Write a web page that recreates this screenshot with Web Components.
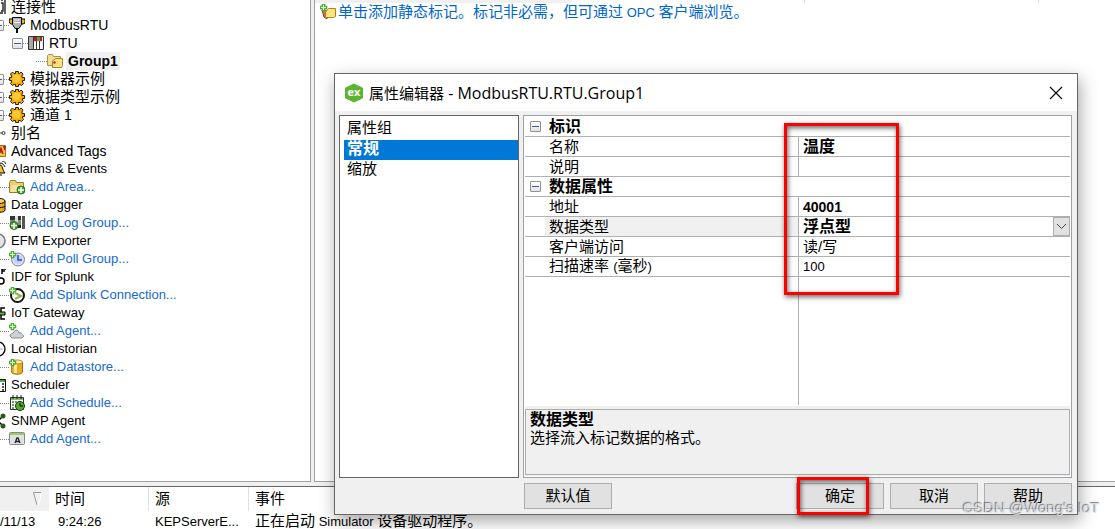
<!DOCTYPE html>
<html lang="zh-CN">
<head>
<meta charset="utf-8">
<meta name="viewport" content="width=device-width, initial-scale=1">
<title>KEPServerEX</title>
<style>
html, body { height: 100%; margin: 0; }
body { font: 13px/18px "Liberation Sans", "Noto Sans CJK SC", sans-serif; color: #000; background: #f0f0f0; overflow: hidden; }
</style>
</head>
<body>
<kep-app></kep-app>

<script>
const ICONS = {
  link: '<path d="M11 1h2M11 4h2v8h-2M15 1v14M10 14h3" stroke="#222" fill="none" stroke-width="1.400"/>',
  serial: '<path d="M0 2h4v5H2L.500 6zM12 2h4v4l-2 1h-2z" fill="#f6b51c" stroke="#000"/><path d="M3.500 .5h9v7l-2.500 4H6l-2.500-4z" fill="#b4b4b4" stroke="#000"/><path d="M5 3h6M5 5.500h6" stroke="#eee"/><path d="M8 11v5" stroke="#000" stroke-width="2"/>',
  device: '<path d="M.5 1.500h15v13H.5z" fill="#e4e4e4" stroke="#333"/><path d="M6 2h8v4H6z" fill="#c9141b"/><path d="M9 2h3v4H9z" fill="#52a342"/><path d="M1 2h4v12H1z" fill="#a9a9a9"/><path d="M5.500 2v12M8.500 6v8M11.500 6v8" stroke="#333"/><path d="M6 7h2v7H6zM9 7h2v7H9zM12 7h2v7h-2z" fill="#fff"/>',
  group: '<path d="M.5 2.500l1-1h4l1 2h7v9H.5z" fill="#f0dc94" stroke="#b6923a"/><path d="M5.500 8l3-2.500h7v7l-1 2h-9z" fill="#ffe07a" stroke="#aa822b"/><circle cx="7.500" cy="9.500" r="1.200" fill="#b22"/>',
  gear: '<path d="M6.500 .5h3v2h1l1.500-1.500 2 2L13 5v1.500h2.500v3H13.500V11l1 1.500-2 2-1.500-1H9.500v2h-3v-2H5L3.500 14.500l-2-2 1-1.500V9.500h-2v-3h2V5L1.500 3l2-2L5 2.500h1.500z" fill="#f4ac0c" stroke="#2b1c00"/><circle cx="7.500" cy="7.500" r="4" fill="#ffca32"/>',
  alias: '<path d="M7 8h5" stroke="#444"/><circle cx="13.500" cy="8" r="1.500" fill="#fff" stroke="#333"/>',
  tag: '<path d="M2 2.500h13.500v11H2z" fill="#f3c641" stroke="#9a7320"/><path d="M9 11l2-6 2 6M10 9h3M13 4h3M14.500 3v4" stroke="#b51c16" stroke-width="1.300" fill="none"/>',
  bell: '<path d="M5 12c4-2 0-8 5-8 3 0 2 5 5 8z" fill="#f4c22e" stroke="#000"/><path d="M10 2c3 0 4 2 5 4M12 0c2 0 3 1 4 3M9 14h3" stroke="#000" fill="none"/>',
  folder: '<path d="M.5 3.500l1-2h5l1 2h7v10H.5z" fill="#eacf75" stroke="#9e7b2f"/><path d="M1 13l2-7h11l-1 7z" fill="#f6e2a0"/>',
  database: '<path d="M4 4v9c0 3 11 3 11 0V4z" fill="#eea91b" stroke="#000"/><ellipse cx="9.500" cy="4" rx="5.500" ry="2.500" fill="#ffd34d" stroke="#000"/><path d="M4 9c0 2 11 2 11 0" fill="none" stroke="#000"/>',
  log: '<path d="M1 1h11v12H1z" fill="#888"/><path d="M1 1h11v4H1z" fill="#333"/><path d="M6 1h3v12H6z" fill="#ddd"/><path d="M13 1h3v13h-3z" fill="#555"/><path d="M8 10h4v3H8z" fill="#222"/>',
  efm: '<circle cx="8" cy="8" r="7" fill="#e4e4e4" stroke="#777" stroke-width="1.500"/>',
  poll: '<circle cx="9" cy="8.500" r="6.500" fill="#dfe3f0" stroke="#80828e"/><circle cx="9" cy="8.500" r="4.500" fill="#c3d0ff"/><path d="M9 4v5h4" stroke="#2847cb" stroke-width="1.500" fill="none"/>',
  idf: '<path d="M12 5V0h4M12 2h3" stroke="#000" stroke-width="1.500" fill="none"/><circle cx="11" cy="12" r="3" fill="#fff" stroke="#000" stroke-width="1.500"/>',
  splunk: '<circle cx="8.500" cy="8.500" r="6.500" fill="#fff" stroke="#151515" stroke-width="2"/><path d="M6 6l6 3-6 3" stroke="#8fb64a" stroke-width="2" fill="none"/>',
  iot: '<path d="M5 7h10v3H5z" fill="#74b63e" stroke="#000"/><path d="M11 7V3h4M11 10v4h4" stroke="#000" fill="none" stroke-width="1.500"/>',
  agent: '<path d="M1 13c0-3 3-2 4-4 1-3 5-2 5 1 3-1 3 2 5 3l-2 2H3z" fill="#cdd1d8" stroke="#888"/>',
  history: '<circle cx="8" cy="8" r="7" fill="#fff" stroke="#000" stroke-width="1.300"/><path d="M8 8h5" stroke="#aaa" fill="none"/>',
  store: '<path d="M2.500 3v10c0 3 11 3 11 0V3z" fill="#e9af20" stroke="#a47414"/><path d="M5 5h3v9H5z" fill="#ffe99a"/><ellipse cx="8" cy="3" rx="5.500" ry="2" fill="#fff0a9" stroke="#b88b21"/>',
  calendar: '<path d="M1 2.500h14.500v12H1z" fill="#fff" stroke="#111"/><path d="M1 3h14v2H1z" fill="#57a83a"/><path d="M3 7h2M7 7h2M12 7h2M3 10h2M7 10h2M12 10h2M12 13h2" stroke="#222" stroke-width="1.500"/>',
  schedule: '<path d="M1.500 2.500h13v12h-13z" fill="#fff" stroke="#233"/><path d="M2 3h12v2H2z" fill="#86bd68"/><path d="M4 0v4M8 0v4M12 0v4" stroke="#222"/><path d="M3 7h2M6 7h2M9 7h2M3 10h2M3 13h2" stroke="#3b7d29" stroke-width="1.500"/><circle cx="11" cy="11" r="4.500" fill="#55a82f" stroke="#173c0c"/><path d="M11 8v3h3" stroke="#000" fill="none"/>',
  snmp: '<path d="M8 8l5-5M8 8l5 5" stroke="#000" stroke-width="1.500"/><circle cx="13" cy="3" r="2.500" fill="#285b20"/><circle cx="13" cy="13" r="2.500" fill="#285b20"/><circle cx="8" cy="8" r="2" fill="#000"/>',
  form: '<rect x=".5" y="1.500" width="15" height="12" rx="1" fill="#dfe2e6" stroke="#888"/><path d="M1 2h14v2H1z" fill="#9fcc61"/><path d="M6 12l2-5h1l2 5M7 10.500h3" fill="none" stroke="#222" stroke-width="1.300"/>',
  newtag: '<path d="M2 6l2 7 3 2V7z" fill="#d96f5b" stroke="#853d33"/><path d="M5.500 8l3-3.500h7v8l-2 1h-8z" fill="#ffe27a" stroke="#ac8225"/>'
};
const PLUS = {
  br: '<circle cx="12" cy="11" r="4" fill="#42a62c" stroke="#267416"/><path d="M12 8v6M9 11h6" stroke="#fff" stroke-width="1.500"/>',
  bl: '<circle cx="5" cy="10.500" r="4" fill="#42a62c" stroke="#267416"/><path d="M5 8v6M2 10.500h6" stroke="#fff" stroke-width="1.500"/>',
  tl: '<path d="M2 0h3v2h2v3H5v2H2V5H0V2h2z" fill="#5ab83a" stroke="#3d9228" stroke-width=".500"/><path d="M3.500 1v5M1 3.500h5" stroke="#d9ffc9"/>'
};

const define = (name, css, html, setup) => customElements.define(name, class extends HTMLElement {
  constructor() {
    super();
    const root = this.attachShadow({ mode: 'open' });
    const t = document.createElement('template');
    t.innerHTML = `<style>*{box-sizing:border-box}.cjk{font-size:15px}${css}</style>${html}`;
    root.append(t.content.cloneNode(true));
  }
  connectedCallback() { if (setup) setup.call(this, this.shadowRoot); }
});

define('kep-icon', ':host{display:block;flex:none;width:16px;height:16px}svg{display:block;width:16px;height:16px}',
  '<svg viewBox="0 0 16 16" aria-hidden="true"></svg>',
  function (root) {
    root.querySelector('svg').innerHTML = (ICONS[this.getAttribute('name')] || '') + (PLUS[this.getAttribute('plus')] || '');
  });

define('kep-expander', `
:host{display:block;width:11px;height:11px;flex:none}
button{display:block;width:11px;height:11px;padding:0;border:1px solid #919191;border-radius:1px;background:linear-gradient(#fff,#e2e2e2)}
button::after{content:"";display:block;width:7px;height:1px;margin:0 auto;background:#3b5aa8}`,
  '<button type="button" aria-label="折叠"></button>');

define('kep-tree-item', `
:host{display:flex;align-items:center;height:18px;white-space:nowrap}
.gutter{display:flex;align-items:center;justify-content:flex-end;flex:none;width:0}
:host([level="1"]) .gutter{width:19px}
:host([level="2"]) .gutter{width:38px}
:host([level="3"]) .gutter{width:57px}
.dots{width:5px;border-top:1px dotted #888}
.leaf .dots{width:11px}
.label{margin-left:3px;padding:0 2px}
a{color:#1569d0;text-decoration:none}
:host([large]) .label{font-size:14px}
:host([selected]) .label{background:#f0f0f0;font-weight:bold;font-size:14px}`,
  `<span class="gutter"><span class="dots"></span></span><kep-icon></kep-icon><span class="label"><slot></slot></span>`,
  function (root) {
    const icon = root.querySelector('kep-icon');
    icon.replaceWith(Object.assign(document.createElement('template'), {
      innerHTML: `<kep-icon name="${this.getAttribute('icon')}" plus="${this.getAttribute('plus') || ''}"></kep-icon>`
    }).content);
    const gutter = root.querySelector('.gutter');
    if (this.hasAttribute('open')) gutter.prepend(document.createElement('kep-expander'));
    else gutter.classList.add('leaf');
    if (this.hasAttribute('link')) {
      const a = document.createElement('a');
      a.href = '#';
      a.append(document.createElement('slot'));
      root.querySelector('.label').replaceChildren(a);
    }
  });

define('kep-tree', `
:host{display:block;background:#fff;border-right:1px solid #a0a0a0;border-bottom:1px solid #a0a0a0;overflow:hidden}
nav{margin:-2px 0 0 -10px}`,
  `<nav aria-label="项目">
<kep-tree-item icon="link"><span class="cjk">连接性</span></kep-tree-item>
<kep-tree-item level="1" icon="serial" open large>ModbusRTU</kep-tree-item>
<kep-tree-item level="2" icon="device" open large>RTU</kep-tree-item>
<kep-tree-item level="3" icon="group" selected>Group1</kep-tree-item>
<kep-tree-item level="1" icon="gear" open><span class="cjk">模拟器示例</span></kep-tree-item>
<kep-tree-item level="1" icon="gear" open><span class="cjk">数据类型示例</span></kep-tree-item>
<kep-tree-item level="1" icon="gear" open large><span class="cjk">通道</span> 1</kep-tree-item>
<kep-tree-item icon="alias"><span class="cjk">别名</span></kep-tree-item>
<kep-tree-item icon="tag" large>Advanced Tags</kep-tree-item>
<kep-tree-item icon="bell">Alarms &amp; Events</kep-tree-item>
<kep-tree-item level="1" icon="folder" plus="br" link>Add Area...</kep-tree-item>
<kep-tree-item icon="database">Data Logger</kep-tree-item>
<kep-tree-item level="1" icon="log" plus="bl" link>Add Log Group...</kep-tree-item>
<kep-tree-item icon="efm">EFM Exporter</kep-tree-item>
<kep-tree-item level="1" icon="poll" plus="tl" link>Add Poll Group...</kep-tree-item>
<kep-tree-item icon="idf">IDF for Splunk</kep-tree-item>
<kep-tree-item level="1" icon="splunk" plus="tl" link>Add Splunk Connection...</kep-tree-item>
<kep-tree-item icon="iot">IoT Gateway</kep-tree-item>
<kep-tree-item level="1" icon="agent" plus="tl" link>Add Agent...</kep-tree-item>
<kep-tree-item icon="history">Local Historian</kep-tree-item>
<kep-tree-item level="1" icon="store" plus="tl" link>Add Datastore...</kep-tree-item>
<kep-tree-item icon="calendar">Scheduler</kep-tree-item>
<kep-tree-item level="1" icon="schedule" link>Add Schedule...</kep-tree-item>
<kep-tree-item icon="snmp">SNMP Agent</kep-tree-item>
<kep-tree-item level="1" icon="form" link>Add Agent...</kep-tree-item>
</nav>`);

define('kep-tags', `
:host{display:block;background:#fff;border-left:1px solid #a0a0a0;border-bottom:1px solid #a0a0a0;overflow:hidden}
.head{display:flex;height:3px}
.head span{width:234px;border-right:1px solid #e0e0e0}
.head span:first-child{width:256px;background:#f0f0f0;border:0}
a{display:flex;align-items:center;gap:2px;height:18px;padding-left:5px;color:#0066cc;text-decoration:none;white-space:nowrap}`,
  `<div class="head"><span></span><span></span><span></span></div>
<a href="#"><kep-icon name="newtag" plus="tl"></kep-icon><span><span class="cjk">单击添加静态标记。标记非必需，但可通过</span> OPC <span class="cjk">客户端浏览。</span></span></a>`);

define('kep-log', `
:host{display:block;background:#fff;border-top:1px solid #696969;overflow:hidden}
table{width:100%;border-collapse:separate;border-spacing:0;table-layout:fixed}
col.date{width:49px}col.time,col.source{width:100px}
th{height:24px;padding:0 6px;font-weight:normal;text-align:left;border-right:1px solid #e0e0e0}
th:first-child{background:#f0f0f0;border:0}
th:last-child{border:0}
th svg{display:block;margin-left:27px}
td{height:18px;padding:1px 6px 0;line-height:17px;white-space:nowrap;overflow:hidden}
td:first-child{padding-left:0}td:nth-child(2){padding-left:9px}`,
  `<table><colgroup><col class="date"><col class="time"><col class="source"><col></colgroup>
<thead><tr><th aria-label="日期"><svg width="9" height="14" viewBox="0 0 9 14" aria-hidden="true"><path d="M8 .5H.5L4 13" fill="none" stroke="#999"/><path d="M7.500 1v5L5 13" fill="none" stroke="#fff"/></svg></th><th class="cjk">时间</th><th class="cjk">源</th><th class="cjk">事件</th></tr></thead>
<tbody><tr><td>/11/13</td><td>9:24:26</td><td>KEPServerE...</td><td><span class="cjk">正在启动</span> Simulator <span class="cjk">设备驱动程序。</span></td></tr></tbody></table>`);

define('kep-button', `
:host{display:block;width:88px;height:26px}
button{display:block;width:100%;height:100%;padding:0;border:1px solid #adadad;background:#e1e1e1;font:inherit;font-size:15px;line-height:18px;color:#000}`,
  '<button type="button"><slot></slot></button>');

define('kep-mark', `
:host{display:block;position:absolute;box-sizing:border-box;pointer-events:none;border:3px solid #f00;box-shadow:1px 2px 5px rgba(0,0,0,.6),inset 1px 2px 5px rgba(0,0,0,.6)}`, '');

define('kep-groups', `
:host{display:block;background:#fff;border:1px solid #646464;padding:3px 0 0 4px}
ul{margin:0;padding:0;list-style:none;font-size:15px}
li{height:20px;padding:0 3px;line-height:18px}
li:first-child{height:21px}
[aria-selected=true]{background:#0078d7;color:#fff;font-weight:bold;font-size:16px}`,
  `<ul role="listbox" aria-label="属性组"><li role="presentation">属性组</li><li role="option" aria-selected="true">常规</li><li role="option" aria-selected="false">缩放</li></ul>`);

define('kep-properties', `
:host{display:flex;flex-direction:column;background:#fff;border:1px solid #a0a0a8;padding:1px 1px 1px}
.grid{flex:1;display:flex;flex-direction:column}
table{width:100%;border-collapse:separate;border-spacing:0;table-layout:fixed}
col.gutter{width:20px}col.name{width:253px}
th,td{height:20px;padding:0;border-bottom:1px solid #b0b0b0;text-align:left;font-weight:normal;font-size:15px;line-height:18px;white-space:nowrap}
th{padding-left:4px}
.cat th{font-weight:bold;font-size:16px}
td.v{border-left:1px solid #b0b0b0;padding-left:4px}
td.b{font-weight:bold;font-size:16px}
.cat th:first-child{padding-left:5px}
.active th{background:#f0f0f0}
.latin{font-size:13px}.b .latin{font-size:14px}
.combo{display:flex;height:19px}
select{appearance:none;flex:1;min-width:0;height:19px;padding:0;border:0;background:transparent;font:inherit;line-height:18px;color:#000}
.arrow{display:grid;place-items:center;width:17px;height:19px;flex:none;background:#e1e1e1;border:1px solid #adadad;pointer-events:none}
.rest{flex:1;margin:0 0 1px 273px;border-left:1px solid #b0b0b0}
.help{height:70px;padding-top:3px;background:#f0f0f0}
.help div{height:66px;padding:1px 4px;border:1px solid #adadad}
h3,p{margin:0;font-size:16px;line-height:18px}
p{font-size:15px}`,
  `<div class="grid"><table>
<colgroup><col class="gutter"><col class="name"><col></colgroup>
<tbody>
<tr class="cat"><th><kep-expander></kep-expander></th><th colspan="2">标识</th></tr>
<tr><td></td><th>名称</th><td class="v b">温度</td></tr>
<tr><td></td><th>说明</th><td class="v"></td></tr>
<tr class="cat"><th><kep-expander></kep-expander></th><th colspan="2">数据属性</th></tr>
<tr><td></td><th>地址</th><td class="v b"><span class="latin">40001</span></td></tr>
<tr class="active"><td></td><th><label for="type">数据类型</label></th><td class="v b"><div class="combo"><select id="type"><option>浮点型</option></select><span class="arrow"><svg width="11" height="7" viewBox="0 0 11 7" aria-hidden="true"><path d="M1 1l4.500 4.500L10 1" fill="none" stroke="#444"/></svg></span></div></td></tr>
<tr><td></td><th>客户端访问</th><td class="v">读/写</td></tr>
<tr><td></td><th>扫描速率 <span class="latin">(</span>毫秒<span class="latin">)</span></th><td class="v"><span class="latin">100</span></td></tr>
</tbody></table><div class="rest"></div></div>
<div class="help"><div><h3>数据类型</h3><p>选择流入标记数据的格式。</p></div></div>`);

define('kep-dialog', `
:host{display:flex;flex-direction:column;box-sizing:border-box;background:#f0f0f0;border:1px solid #666;box-shadow:2px 6px 16px rgba(0,0,0,.35)}
header{display:flex;align-items:center;height:37px;padding:0 13px 0 9px;background:#fff}
h2{flex:1;margin:0 0 0 5px;font:16px/20px "Open Sans","Noto Sans CJK SC",sans-serif}
header button{width:16px;height:16px;padding:0;border:0;background:none}
header svg{display:block}
.logo{font:bold 11px "Open Sans",sans-serif}
.body{flex:1;display:grid;grid-template-columns:180px 1fr;gap:4px;padding:4px 5px 0 4px}
.side{margin-bottom:36px}
.main{display:flex;flex-direction:column}
kep-properties{flex:1}
footer{display:flex;gap:6px;padding:5px 0 5px 1px;height:36px}
.space{flex:1}
.ok{position:relative}
.values{left:449px;top:49px;width:115px;height:172px}
.confirm{left:1px;top:-6px;width:72px;height:38px}`,
  `<header><svg width="20" height="20" viewBox="0 0 20 20" aria-hidden="true"><path d="M10 1l8.500 4v10L10 19l-8.500-4V5z" fill="#5cb531" stroke="#5cb531" stroke-linejoin="round"/><text class="logo" x="10" y="13" text-anchor="middle" fill="#fff">ex</text></svg>
<h2><slot name="title"></slot></h2>
<button type="button" aria-label="关闭"><svg width="16" height="16" viewBox="0 0 16 16"><path d="M2 2l12 12M14 2L2 14" stroke="#000" stroke-width="1.100"/></svg></button></header>
<div class="body"><kep-groups class="side"></kep-groups>
<div class="main"><kep-properties></kep-properties>
<footer><kep-button>默认值</kep-button><span class="space"></span><div class="ok"><kep-button>确定</kep-button><kep-mark class="confirm"></kep-mark></div><kep-button>取消</kep-button><kep-button>帮助</kep-button></footer></div></div>
<kep-mark class="values"></kep-mark>`);

define('kep-app', `
:host{display:grid;position:relative;grid-template-columns:311px 1fr;grid-template-rows:1fr 43px;column-gap:3px;row-gap:4px;height:100vh;overflow:hidden}
kep-log{grid-column:1/-1}
kep-dialog{position:absolute;left:334px;right:37px;top:73px;bottom:14px}
.watermark{position:absolute;right:15px;bottom:12px;font-size:15px;line-height:18px;color:rgba(225,225,225,.9);text-shadow:-1px -1px 1px rgba(90,90,90,.8)}`,
  `<kep-tree></kep-tree><kep-tags></kep-tags><kep-log></kep-log>
<kep-dialog role="dialog"><span slot="title"><span class="cjk">属性编辑器</span> - ModbusRTU.RTU.Group1</span></kep-dialog>
<span class="watermark">CSDN @Wong's IoT</span>`);
</script>
</body>
</html>
